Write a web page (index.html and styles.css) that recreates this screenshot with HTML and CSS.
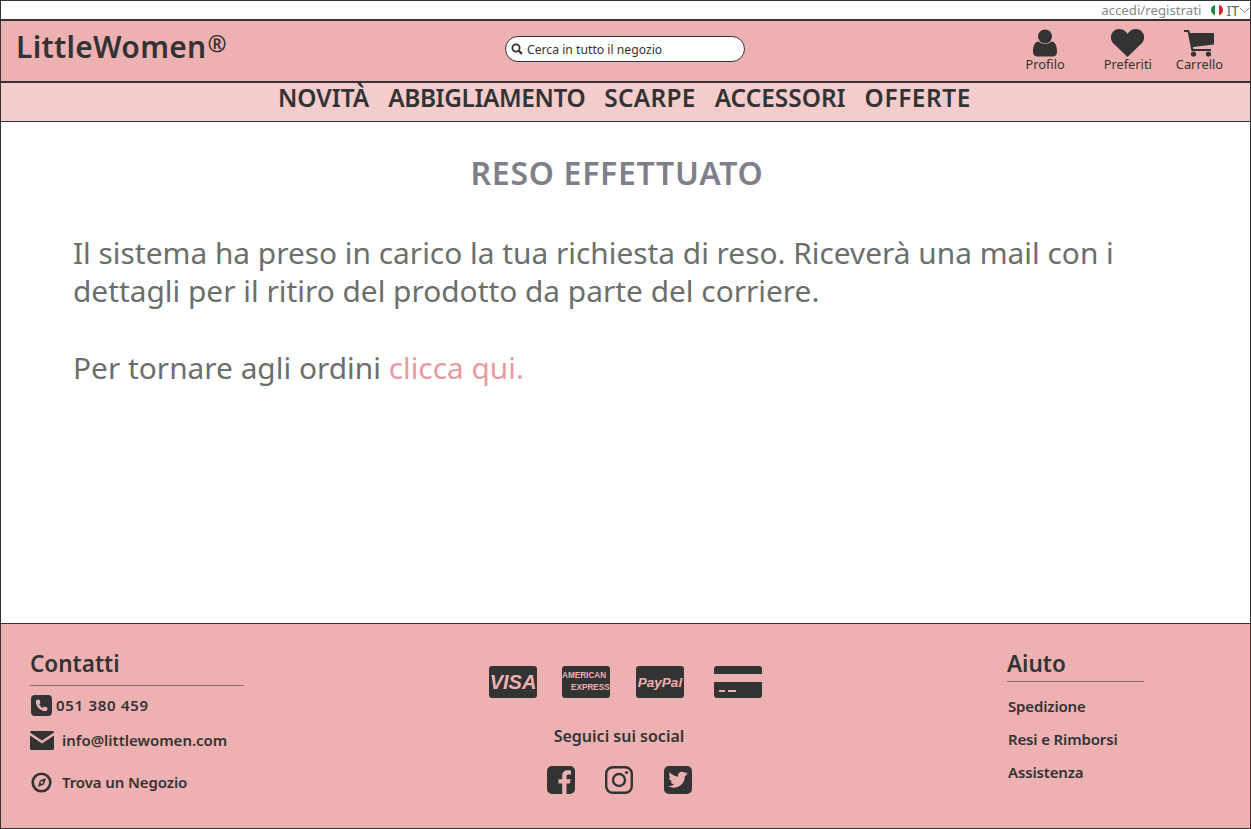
FILE: index.html
```html
<!DOCTYPE html>
<html lang="it">
  <head>
    <meta charset="utf-8">
    <title>LittleWomen - Reso effettuato</title>
    <link rel="stylesheet" href="styles.css">
  </head>
  <body>
    <div class="page">
      <div class="topbar">
        <a class="login" href="#">accedi/registrati</a>
        <svg class="flag" width="14" height="12" viewBox="0 0 14 12">
          <defs><clipPath id="flagClip"><ellipse cx="7" cy="6" rx="6" ry="5.5"/></clipPath></defs>
          <g clip-path="url(#flagClip)">
            <rect x="0" width="5" height="12" fill="#1f8a3a"/>
            <rect x="5" width="4" height="12" fill="#fff"/>
            <rect x="9" width="5" height="12" fill="#d2232a"/>
          </g>
        </svg>
        <span class="lang">IT</span>
        <svg class="chevron" width="11" height="7" viewBox="0 0 11 7"><path d="M1 1l4.500 4.500L10 1" fill="none" stroke="#888" stroke-width="1"/></svg>
      </div>

      <header class="header">
        <div class="logo">LittleWomen<span class="logo-mark">®</span></div>
        <div class="search">
          <svg width="12" height="12" viewBox="0 0 12 12"><circle cx="5" cy="5" r="3.600" fill="none" stroke="#333" stroke-width="1.800"/><path d="M7.700 7.700l3.200 3.200" stroke="#333" stroke-width="2.200"/></svg>
          <span>Cerca in tutto il negozio</span>
        </div>
        <div class="tools">
          <a class="tool tool-profile" href="#">
            <svg width="24" height="28" viewBox="0 0 24 28"><circle cx="12" cy="7.500" r="7"/><path d="M0 23c0-6 1.500-10 5.500-10.500C7 14 9.300 15 12 15s5-1 6.500-2.500C22.500 13 24 17 24 23c0 3-2 4.500-4.500 4.500h-15C2 27.500 0 26 0 23z"/></svg>
            <span>Profilo</span>
          </a>
          <a class="tool tool-fav" href="#">
            <svg width="33" height="28" viewBox="0 0 33 28"><path d="M16.500 28L2.500 14.500C-1 11-.8 5.500 2.300 2.500 5.500-.7 11-.7 14.300 2.500l2.200 2.200 2.200-2.200C22-.7 27.500-.7 30.700 2.500c3.100 3 3.300 8.500-.2 12z"/></svg>
            <span>Preferiti</span>
          </a>
          <a class="tool tool-cart" href="#">
            <svg width="30" height="28" viewBox="0 0 30 28"><path d="M0 1h5l1.200 3H30v11.500L8.800 18l.5 2H27v2H7.500L3.700 3H0z"/><circle cx="9.500" cy="25" r="2.600"/><circle cx="24.500" cy="25" r="2.600"/></svg>
            <span>Carrello</span>
          </a>
        </div>
      </header>

      <nav class="nav">
        <a href="#">NOVITÀ</a>
        <a class="nav-tight" href="#">ABBIGLIAMENTO</a>
        <a class="nav-scarpe" href="#">SCARPE</a>
        <a href="#">ACCESSORI</a>
        <a class="nav-wide" href="#">OFFERTE</a>
      </nav>

      <main class="content">
        <h1>RESO EFFETTUATO</h1>
        <p>Il sistema ha preso in carico la tua richiesta di reso. Riceverà una mail con i dettagli per il ritiro del prodotto da parte del corriere.</p>
        <p>Per tornare agli ordini <a href="#">clicca qui.</a></p>
      </main>

      <footer class="footer">
        <div class="contacts">
          <h3>Contatti</h3>
          <div class="contact contact-phone">
            <svg width="21" height="21" viewBox="0 0 21 21"><rect width="21" height="21" rx="4" fill="#333"/><path d="M6.500 4.500l2 .3 1 3.200-1.400 1.300c.7 1.500 2 2.800 3.600 3.600l1.300-1.400 3.200 1 .3 2c-.5 1.200-1.700 1.800-3 1.600C9 15.300 5.700 12 4.900 7.500c-.2-1.300.4-2.500 1.600-3z" fill="#eeb1b1"/></svg>
            <span>051 380 459</span>
          </div>
          <div class="contact contact-mail">
            <svg width="24" height="19" viewBox="0 0 24 19"><path d="M1.500 0h21C23.500 0 24 .6 24 1.500L12 9.500 0 1.500C0 .6.500 0 1.500 0z" fill="#333"/><path d="M0 4.500l12 8 12-8v13c0 .9-.6 1.500-1.500 1.500h-21C.6 19 0 18.400 0 17.500z" fill="#333"/></svg>
            <span>info@littlewomen.com</span>
          </div>
          <div class="contact contact-shop">
            <svg width="21" height="21" viewBox="0 0 21 21"><circle cx="10.500" cy="10.500" r="8.800" fill="none" stroke="#333" stroke-width="2.600"/><path d="M15 6l-2 6.500L7 15l1.800-6.500z" fill="#333"/><circle cx="10.800" cy="10.500" r="1.300" fill="#eeb1b1"/></svg>
            <span>Trova un Negozio</span>
          </div>
        </div>

        <div class="middle">
          <div class="cards">
            <div class="card card-visa">VISA</div>
            <div class="card card-amex"><span>AMERICAN</span><span class="amex-second">EXPRESS</span></div>
            <div class="card card-paypal">PayPal</div>
            <svg class="card-generic" width="48" height="32" viewBox="0 0 48 32"><path d="M3 0h42a3 3 0 0 1 3 3v5H0V3a3 3 0 0 1 3-3z" fill="#333"/><path d="M0 16h48v13a3 3 0 0 1-3 3H3a3 3 0 0 1-3-3z" fill="#333"/><rect x="5" y="24" width="6" height="2" fill="#eeb1b1"/><rect x="14" y="24" width="8" height="2" fill="#eeb1b1"/></svg>
          </div>
          <div class="social-title">Seguici sui social</div>
          <div class="social">
            <svg width="28" height="28" viewBox="0 0 28 28"><path d="M5 0h18a5 5 0 0 1 5 5v18a5 5 0 0 1-5 5h-3.500V17.500H23l.6-4.300h-4.100v-2.700c0-1.300.4-2.100 2.200-2.100H24V4.500c-.5-.1-1.800-.2-3.300-.2-3.300 0-5.500 2-5.500 5.600v3.300h-3.700v4.300h3.700V28H5a5 5 0 0 1-5-5V5a5 5 0 0 1 5-5z" fill="#333"/></svg>
            <svg width="28" height="28" viewBox="0 0 28 28"><rect x="1.200" y="1.200" width="25.600" height="25.600" rx="6.500" fill="none" stroke="#333" stroke-width="2.400"/><circle cx="14" cy="14" r="6" fill="none" stroke="#333" stroke-width="2.400"/><circle cx="21.500" cy="6.500" r="1.600" fill="#333"/></svg>
            <svg width="28" height="28" viewBox="0 0 28 28"><rect width="28" height="28" rx="5" fill="#333"/><path d="M24 7.500c-.8.400-1.500.6-2.400.7.900-.5 1.500-1.300 1.800-2.200-.8.500-1.700.8-2.600 1-1.700-1.800-4.600-1.600-6 .3-.7 1-.9 2.200-.6 3.400-3.300-.2-6.400-1.800-8.500-4.400-1.100 1.900-.5 4.300 1.300 5.500-.7 0-1.300-.2-1.900-.5 0 2 1.400 3.700 3.300 4.100-.6.200-1.200.2-1.900.1.500 1.600 2 2.800 3.800 2.800-1.700 1.300-3.900 1.900-6 1.700 5 3.100 11.500 1.700 14.700-3.200 1.200-1.900 1.800-4.100 1.700-6.300.9-.6 1.600-1.300 2.300-2z" fill="#eeb1b1"/></svg>
          </div>
        </div>

        <div class="help">
          <h3>Aiuto</h3>
          <a href="#">Spedizione</a>
          <a href="#">Resi e Rimborsi</a>
          <a href="#">Assistenza</a>
        </div>
      </footer>
    </div>
  </body>
</html>
```

FILE: styles.css
```css
* {
  box-sizing: border-box;
}
body {
  margin: 0;
  font-family: "Noto Sans", sans-serif;
  color: #333;
}
a {
  color: inherit;
  text-decoration: none;
}
.page {
  display: flex;
  flex-direction: column;
  height: 829px;
  border: 1px solid #333;
}

.topbar {
  display: flex;
  justify-content: flex-end;
  align-items: center;
  height: 18px;
  font-size: 13.250px;
  color: #888;
}
.login {
  margin-right: 9px;
}
.lang {
  margin-left: 2px;
  font-size: 14px;
  color: #666;
}

.header {
  display: grid;
  grid-template-columns: 1fr 240px 1fr;
  align-items: center;
  height: 64px;
  padding: 0 16px 0 15px;
  background: #eeb1b1;
  border-top: 2px solid #333;
  border-bottom: 2px solid #333;
}
.logo {
  font-size: 30px;
  font-weight: 600;
  letter-spacing: .3px;
  padding-bottom: 10px;
}
.logo-mark {
  position: relative;
  top: -6px;
  margin-left: 1px;
  font-size: 23px;
  letter-spacing: 0;
}
.search {
  display: flex;
  align-items: center;
  gap: 4px;
  height: 26px;
  margin-bottom: 4px;
  padding-left: 5px;
  background: #fff;
  border: 1px solid #333;
  border-radius: 13px;
  font-size: 12.200px;
}
.tools {
  display: flex;
  justify-content: flex-end;
  margin-right: 11px;
}
.tool {
  display: flex;
  flex-direction: column;
  align-items: center;
  margin-bottom: 1px;
  font-size: 12.800px;
  fill: #333;
}
.tool span {
  line-height: 15px;
}
.tool-fav {
  margin-left: 39px;
}
.tool-cart {
  margin-left: 24px;
}

.nav {
  display: flex;
  justify-content: center;
  align-items: center;
  gap: 19px;
  height: 39px;
  padding: 0 2px 9px 0;
  background: #f4cccc;
  border-bottom: 1px solid #333;
  font-size: 24.400px;
  font-weight: 600;
}
.nav-tight {
  letter-spacing: -.4px;
}
.nav-scarpe {
  letter-spacing: .3px;
}
.nav-wide {
  letter-spacing: .6px;
}

.content {
  flex: 1;
  padding: 31px 72px 0;
}
.content h1 {
  margin: 0 0 41px;
  padding-right: 17px;
  text-align: center;
  font-size: 32px;
  line-height: 40px;
  font-weight: 600;
  letter-spacing: .7px;
  color: #7f7f8a;
}
.content p {
  margin: 0 0 39px;
  font-size: 29.850px;
  line-height: 38px;
  color: #6b6f6b;
}
.content p a {
  color: #e99aa0;
}

.footer {
  display: grid;
  grid-template-columns: 214px 1fr 137px;
  height: 205px;
  padding: 24px 106px 0 29px;
  background: #eeb1b1;
  border-top: 1px solid #333;
  font-size: 15px;
  font-weight: 600;
}
.footer h3 {
  margin: 0 0 8px;
  padding: 1px 0 2px;
  border-bottom: 1px solid #8a6b6b;
  font-size: 22.500px;
  line-height: 30px;
  font-weight: 600;
}
.contacts h3 {
  margin-bottom: 7px;
  padding-bottom: 6px;
}
.contact {
  display: flex;
  align-items: center;
  height: 24px;
  margin-bottom: 11px;
}
.contact svg {
  margin-left: 1px;
}
.contact-phone span {
  margin-left: 4px;
  letter-spacing: .7px;
}
.contact-mail span {
  margin-left: 8px;
}
.contact-shop span {
  margin-left: 10px;
  letter-spacing: -.1px;
}
.contact-mail svg {
  margin-left: 0;
}
.contact-shop {
  margin-top: 18px;
}

.middle {
  display: flex;
  flex-direction: column;
  align-items: center;
  padding-top: 18px;
}
.cards {
  display: flex;
  gap: 25px;
}
.card {
  display: flex;
  align-items: center;
  justify-content: center;
  width: 48px;
  height: 32px;
  background: #333;
  border-radius: 3px;
  font-family: "Liberation Sans", sans-serif;
  color: #eeb1b1;
}
.card-visa {
  font-size: 20px;
  font-weight: 700;
  font-style: italic;
}
.card-paypal {
  margin-left: 1px;
  font-size: 13.500px;
  font-weight: 700;
  font-style: italic;
}
.card-generic {
  margin-left: 5px;
}
.card-amex {
  flex-direction: column;
  align-items: flex-start;
  font-size: 8.200px;
  line-height: 12px;
  font-weight: 700;
}
.amex-second {
  margin-left: 9px;
}
.social-title {
  margin: 27px 13px 0 0;
  font-size: 16px;
}
.social {
  display: flex;
  gap: 30.500px;
  margin: 19px 13px 0 0;
}

.help h3 {
  margin-bottom: 14px;
}
.help a {
  display: block;
  margin: 0 0 13px 1px;
  line-height: 20px;
  letter-spacing: -.15px;
}
```
